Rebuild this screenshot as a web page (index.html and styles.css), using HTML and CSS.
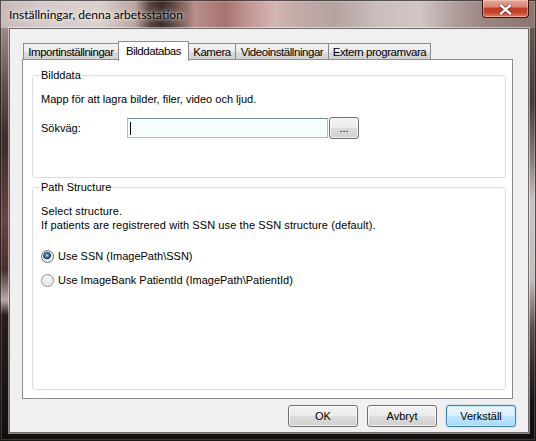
FILE: index.html
```html
<!DOCTYPE html>
<html lang="sv">
<head>
<meta charset="utf-8">
<title>Inställningar, denna arbetsstation</title>
<link rel="stylesheet" href="styles.css">
</head>
<body>
<div class="window">
  <div class="titlebar">
    <span class="title">Inställningar, denna arbetsstation</span>
    <div class="close">
      <svg width="13" height="11" viewBox="0 0 13 11">
        <path d="M2 1.5 L11 9.5 M11 1.5 L2 9.5" stroke="#4a1410" stroke-width="4" stroke-linecap="round" opacity="0.55"/>
        <path d="M2 1.5 L11 9.5 M11 1.5 L2 9.5" stroke="#ffffff" stroke-width="2.4" stroke-linecap="square"/>
      </svg>
    </div>
  </div>
  <div class="client">
    <div class="tabs">
      <div class="tab t1">Importinställningar</div>
      <div class="tab t2 active">Bilddatabas</div>
      <div class="tab t3">Kamera</div>
      <div class="tab t4">Videoinställningar</div>
      <div class="tab t5">Extern programvara</div>
    </div>
    <div class="panel">
      <fieldset class="group g1">
        <legend>Bilddata</legend>
        <p class="desc">Mapp för att lagra bilder, filer, video och ljud.</p>
        <div class="pathrow">
          <span class="label">Sökväg:</span>
          <div class="textbox"><span class="caret"></span></div>
          <div class="btn browse">...</div>
        </div>
      </fieldset>
      <fieldset class="group g2">
        <legend>Path Structure</legend>
        <p class="desc2">Select structure.<br>If patients are registrered with SSN use the SSN structure (default).</p>
        <div class="radio first"><span class="dot checked"></span>Use SSN (ImagePath\SSN)</div>
        <div class="radio second"><span class="dot"></span>Use ImageBank PatientId (ImagePath\PatientId)</div>
      </fieldset>
    </div>
    <div class="buttons">
      <div class="btn">OK</div>
      <div class="btn">Avbryt</div>
      <div class="btn default">Verkställ</div>
    </div>
  </div>
</div>
</body>
</html>
```

FILE: styles.css
```css
html, body {
  margin: 0;
  padding: 0;
  background: #1a1212;
}

.window {
  width: 536px;
  height: 441px;
  box-sizing: border-box;
  padding: 0 7px 8px 9px;
  display: flex;
  flex-direction: column;
  font-family: "Liberation Sans", Arial, sans-serif;
  font-size: 11px;
  color: #000;
  background:
    linear-gradient(to right,
      #c7b8b7 0px, #d6cbca 40px, #dbd1cf 100px, #b8a4a0 135px,
      #5a443f 150px, #3b2c29 162px, #6c514c 176px, #b88f8b 195px,
      #a8726e 225px, #c49996 250px, #d3b5b2 275px, #c2aaa7 300px,
      #b5a3a1 335px, #cbbfbd 380px, #d0c6c4 420px, #b09e9b 455px,
      #9a8581 485px, #8b7571 536px) left top / 100% 28px no-repeat,
    linear-gradient(to bottom,
      #9b8b88 28px, #6a5450 80px, #3e2c2a 140px, #6a4440 220px,
      #4a302c 270px, #b8a8a6 300px, #2a1c1a 315px, #120d0c 441px) left top / 9px 100% no-repeat,
    linear-gradient(to bottom,
      #6a5652 28px, #4a3634 100px, #8a7e7c 160px, #c8c2c0 200px,
      #c2bcba 280px, #5a4a48 330px, #1a1412 400px, #100c0c 441px) right top / 8px 100% no-repeat,
    #17110f;
  box-shadow: inset 0 0 0 1px rgba(0, 0, 0, 0.6), inset 0 0 0 2px rgba(255, 255, 255, 0.18);
}

/* ---------- title bar ---------- */
.titlebar {
  height: 28px;
  flex: none;
  display: flex;
  align-items: flex-start;
}

.title {
  margin-top: 7px;
  font-family: Lato, "Noto Sans", sans-serif;
  font-size: 12px;
  line-height: 16px;
  color: #000;
  text-shadow: 0 0 6px rgba(255, 255, 255, 0.9), 0 0 3px rgba(255, 255, 255, 0.8);
}

.close {
  margin-left: auto;
  width: 47px;
  height: 18px;
  box-sizing: border-box;
  border: 1px solid #3c1612;
  border-top: none;
  border-radius: 0 0 4px 4px;
  background: linear-gradient(to bottom, #e6a898 0%, #d98474 40%, #c23c22 50%, #c8462c 75%, #e08466 100%);
  box-shadow: inset 0 0 0 1px rgba(255, 220, 210, 0.45);
  display: flex;
  align-items: center;
  justify-content: center;
}

.close svg {
  display: block;
  margin-top: 1px;
}

/* ---------- client area ---------- */
.client {
  flex: 1;
  box-sizing: border-box;
  background: #f0f0f0;
  border: 1px solid rgba(0, 0, 0, 0.55);
  box-shadow: 0 0 0 1px rgba(255, 255, 255, 0.5);
  padding: 12px 12px 0 12px;
  display: flex;
  flex-direction: column;
}

/* ---------- tabs ---------- */
.tabs {
  height: 19px;
  margin-bottom: -1px;
  margin-left: 1px;
  display: flex;
  align-items: flex-end;
}

.tab {
  box-sizing: border-box;
  height: 17px;
  border: 1px solid #898c95;
  border-bottom: none;
  background: linear-gradient(to bottom, #f3f3f3 0%, #ebebeb 50%, #dddddd 51%, #cfcfcf 100%);
  text-align: center;
  font-size: 11.5px;
  letter-spacing: -0.45px;
  line-height: 16px;
  white-space: nowrap;
  margin-left: -1px;
}

.tab.t1 { width: 96px; margin-left: 0; }
.tab.t2 { width: 71px; }
.tab.t3 { width: 48px; }
.tab.t4 { width: 94px; }
.tab.t5 { width: 103px; }

.tab.active {
  height: 20px;
  background: #ffffff;
  position: relative;
  z-index: 1;
  line-height: 18px;
  margin-bottom: -1px;
}

.panel {
  width: 491px;
  height: 340px;
  box-sizing: border-box;
  background: #ffffff;
  border: 1px solid #898c95;
  padding: 0 0 8px 9px;
  display: flex;
  flex-direction: column;
}

/* ---------- group boxes ---------- */
.group {
  width: 474px;
  box-sizing: border-box;
  margin: 0;
  border: 1px solid #d5dfe5;
  border-radius: 3px;
  padding: 0 8px 0 7px;
  min-width: 0;
}

.group legend {
  padding: 0 1px;
  line-height: 13px;
  font-size: 11px;
}

.g1 {
  margin-top: 9px;
  padding-bottom: 38px;
}

.g2 {
  margin-top: 3px;
  flex: 1;
}

.desc {
  margin: 11px 0 11px 1px;
  line-height: 13px;
}

.pathrow {
  height: 22px;
  display: flex;
  align-items: center;
  margin-left: 1px;
}

.label {
  width: 86px;
  line-height: 13px;
}

.textbox {
  width: 201px;
  height: 20px;
  box-sizing: border-box;
  border: 1px solid #a9c0d4;
  border-top-color: #6f8fab;
  background: #f6fdfd;
  display: flex;
  align-items: center;
}

.caret {
  width: 1px;
  height: 13px;
  background: #000;
  margin-left: 2px;
}

.desc2 {
  margin: 10px 0 0 1px;
  line-height: 14px;
  letter-spacing: 0.1px;
}

.radio {
  display: flex;
  align-items: center;
  height: 13px;
  line-height: 13px;
  margin-left: 1px;
}

.radio.first { margin-top: 18px; }
.radio.second { margin-top: 11px; }

.dot {
  width: 13px;
  height: 13px;
  box-sizing: border-box;
  border-radius: 50%;
  border: 1px solid #8f9090;
  background: radial-gradient(circle at 50% 40%, #fbfbfb 0, #e9e9e9 45%, #d3d3d3 100%);
  box-shadow: inset 0 0 0 1px rgba(255, 255, 255, 0.7);
  margin-right: 4px;
  flex: none;
}

.dot.checked {
  border-color: #5e7387;
  background:
    radial-gradient(circle at 45% 40%, #b9d9f0 0, #5c8cb4 1.5px, #2a4c70 3px, #1c3554 3.6px, rgba(28, 53, 84, 0) 4.2px),
    radial-gradient(circle at 50% 40%, #fbfbfb 0, #e9e9e9 45%, #d3d3d3 100%);
}

/* ---------- buttons ---------- */
.btn {
  box-sizing: border-box;
  height: 22px;
  border: 1px solid #707070;
  border-radius: 3px;
  background: linear-gradient(to bottom, #f2f2f2 0%, #ebebeb 50%, #dddddd 51%, #cfcfcf 100%);
  box-shadow: inset 0 0 0 1px rgba(255, 255, 255, 0.75);
  display: flex;
  align-items: center;
  justify-content: center;
  line-height: 13px;
  color: #000;
}

.browse {
  width: 30px;
  margin-left: 1px;
}

.buttons {
  margin-top: 6px;
  display: flex;
  justify-content: flex-end;
  gap: 9px;
}

.buttons .btn {
  width: 70px;
}

.btn.default {
  border-color: #3c7fb1;
  background: linear-gradient(to bottom, #eaf6fd 0%, #d9f0fc 50%, #bee6fd 51%, #a7d9f5 100%);
  box-shadow: inset 0 0 0 1px rgba(190, 235, 255, 0.9), 0 0 2px rgba(60, 160, 220, 0.4);
}
```
